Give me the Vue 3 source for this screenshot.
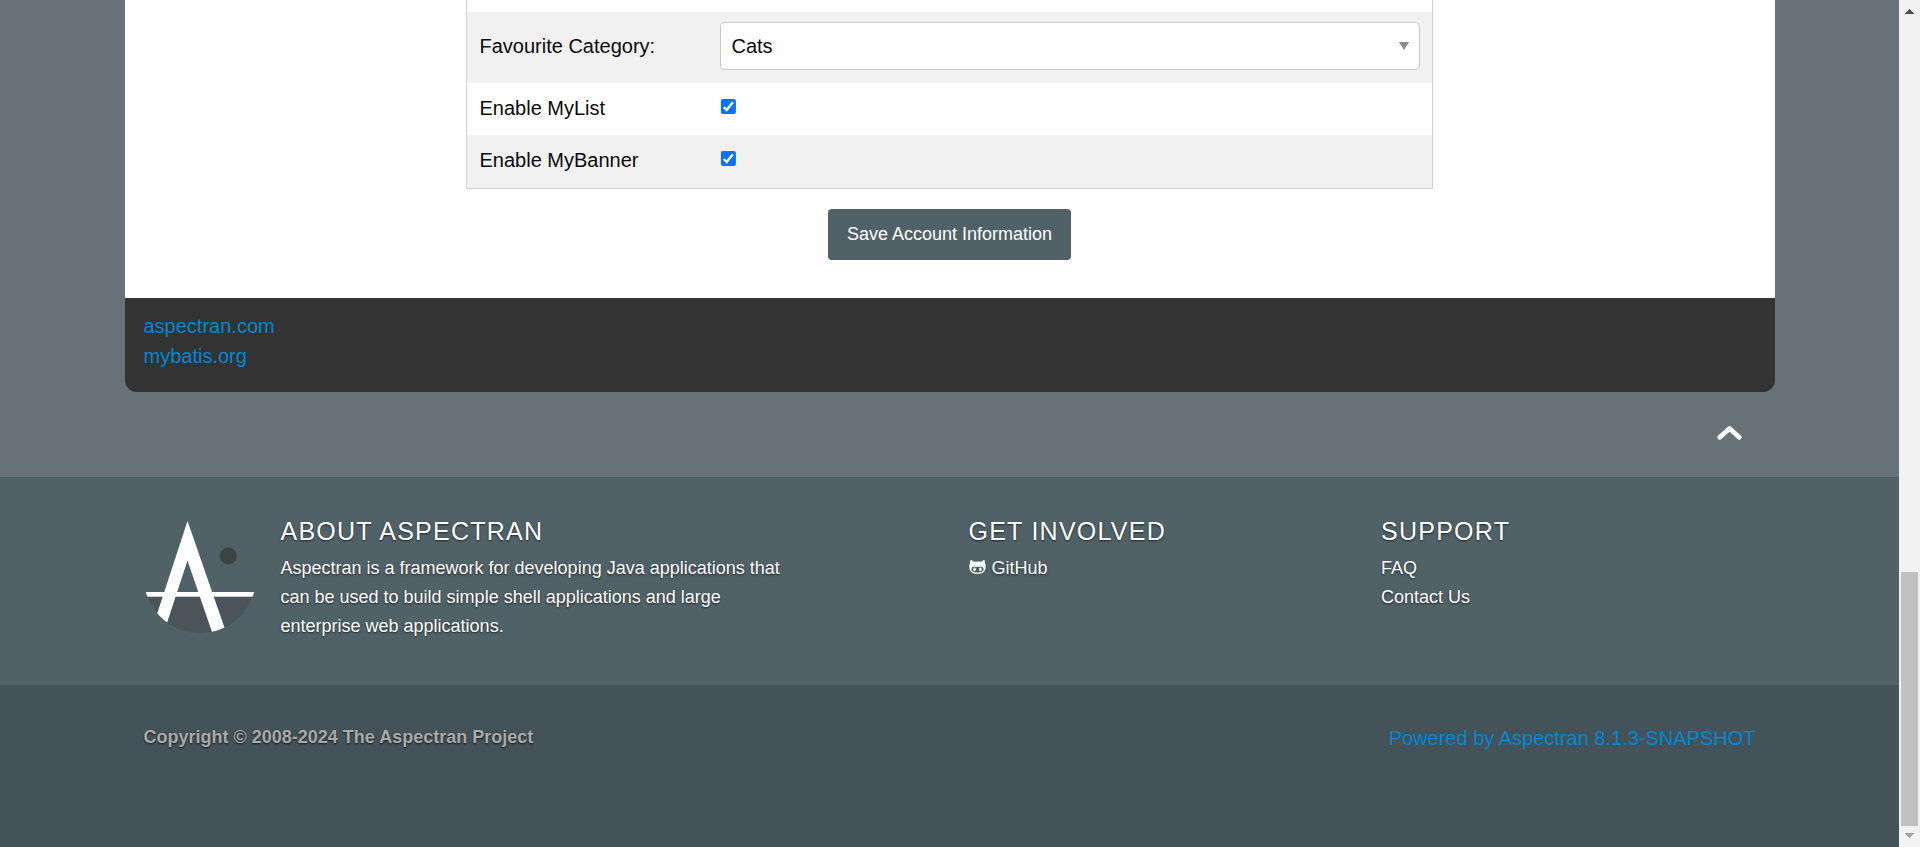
<script setup>
const options = ['Enable MyList', 'Enable MyBanner']
const columns = [
  { title: 'Get Involved', links: ['GitHub'], icon: true },
  { title: 'Support', links: ['FAQ', 'Contact Us'], icon: false }
]
</script>

<template>
  <div class="window">
    <div class="page">
      <main class="card">
        <div class="content">
          <div class="table">
            <div class="row cut"></div>
            <div class="row category">
              <label class="label">Favourite Category:</label>
              <div class="select">
                <span>Cats</span>
                <svg width="10" height="8" viewBox="0 0 10 8"><path d="M0 0H10L5 8Z" fill="#8a8a8a" /></svg>
              </div>
            </div>
            <div v-for="(name, i) in options" :key="name" class="row option" :class="{ shaded: i === 1 }">
              <label class="label">{{ name }}</label>
              <svg class="check" width="17" height="16" viewBox="0 0 17 16">
                <rect x="0.9" y="0" width="15" height="15" rx="2" fill="#0075ff" />
                <path d="M3.7 8L6.7 11L12.9 3.3" fill="none" stroke="#fff" stroke-width="2.4" />
              </svg>
            </div>
          </div>
          <button class="save" type="button">Save Account Information</button>
        </div>
        <nav class="links">
          <a>aspectran.com</a>
          <a>mybatis.org</a>
        </nav>
      </main>
      <div class="totop">
        <svg width="26" height="16" viewBox="0 0 26 16">
          <path d="M2.8 12.3L12.5 3.4L22.2 12.3" fill="none" stroke="#fff" stroke-width="4.8" stroke-linecap="round" stroke-linejoin="round" />
        </svg>
      </div>
      <footer class="footer">
        <svg class="logo" width="112" height="114" viewBox="144 520 112 114">
          <defs>
            <clipPath id="disc">
              <circle cx="200" cy="576.7" r="56.4" />
              <rect x="170" y="520" width="40" height="30" />
            </clipPath>
          </defs>
          <g clip-path="url(#disc)">
            <rect x="140" y="596" width="120" height="40" fill="#4b5459" />
            <rect x="140" y="592" width="120" height="4.7" fill="#fff" />
            <path d="M187.5 521L148.5 640H161.4L187.5 560.5L214.7 640H228.8Z" fill="#fff" />
          </g>
          <circle cx="228.3" cy="556" r="8.5" fill="#3d4444" />
        </svg>
        <section class="about">
          <h4>About Aspectran</h4>
          <p>Aspectran is a framework for developing Java applications that can be used to build simple shell applications and large enterprise web applications.</p>
        </section>
        <section v-for="col in columns" :key="col.title" class="col">
          <h4>{{ col.title }}</h4>
          <a v-for="link in col.links" :key="link">
            <svg v-if="col.icon" class="cat" width="17" height="14" viewBox="0 0 18 15" preserveAspectRatio="none">
              <path fill="#fff" fill-rule="evenodd" d="M1.4 0.3C3 0.2 4.3 1 5.3 1.9Q9 1.3 12.7 1.9C13.7 1 15 .2 16.6 .3Q17.2 2 16.8 3.6Q18 5.2 17.6 8C17.3 12.5 14.6 14.8 9 14.8S.7 12.5 .4 8Q0 5.2 1.2 3.6Q.8 2 1.4 .3ZM5.2 7.1C3.4 7.1 2.6 8.2 2.6 9.9C2.6 12.5 4.8 13.3 9 13.3S15.4 12.5 15.4 9.9C15.4 8.2 14.6 7.1 12.8 7.1Z" />
              <ellipse cx="5.9" cy="10" rx="1.3" ry="2" fill="#fff" />
              <ellipse cx="12.1" cy="10" rx="1.3" ry="2" fill="#fff" />
            </svg>{{ link }}
          </a>
        </section>
      </footer>
      <div class="bottom">
        <strong>Copyright © 2008-2024 The Aspectran Project</strong>
        <a>Powered by Aspectran 8.1.3-SNAPSHOT</a>
      </div>
    </div>
    <div class="scrollbar">
      <svg width="9" height="5" viewBox="0 0 9 5" shape-rendering="crispEdges"><path d="M0 5L4.5 0L9 5Z" fill="#505050" /></svg>
      <div class="thumb"></div>
      <svg width="9" height="5" viewBox="0 0 9 5" shape-rendering="crispEdges"><path d="M0 0L4.5 5L9 0Z" fill="#a3a3a3" /></svg>
    </div>
  </div>
</template>

<style>
body { margin: 0; overflow: hidden; }
</style>

<style scoped>
* { box-sizing: border-box; }
.window {
  display: flex;
  width: 1920px;
  height: 847px;
  overflow: hidden;
  font-family: "Liberation Sans", Arial, sans-serif;
  font-size: 20px;
  line-height: 30px;
  color: #0a0a0a;
}
.page { width: 1899px; display: flex; flex-direction: column; background: #667278; }
.card { width: 1650px; height: 392px; margin-left: 125px; border-radius: 0 0 12px 12px; overflow: hidden; background: #333; }
.content { height: 298px; background: #fefefe; display: flex; flex-direction: column; align-items: center; }
.table { width: 967px; height: 189px; border: 1px solid #d3d3d3; border-top: 0; margin-left: -1px; }
.row { display: flex; padding-left: 12.5px; }
.cut { height: 12px; }
.category { height: 71px; background: #f1f1f1; padding-top: 10px; }
.option { height: 52px; padding-top: 10px; }
.shaded { height: 53px; background: #f1f1f1; }
.label { width: 240.5px; }
.category .label { padding-top: 9px; }
.select {
  width: 700px; height: 48px; padding: 8px 10.5px 0 10.5px;
  display: flex; justify-content: space-between;
  border: 1px solid #cacaca; border-radius: 4px; background: #fefefe;
}
.select svg { margin-top: 11px; }
.check { margin-top: 6px; }
.save {
  width: 243px; height: 51px; margin: 20px 1px 0 0; padding: 0;
  border: 0; border-radius: 4px; background: #506168; color: #fefefe;
  font: 18px/49px "Liberation Sans", Arial, sans-serif;
}
.links { padding: 13px 18.5px 0; display: flex; flex-direction: column; }
.links a, .bottom a { color: #0088d2; }
.totop { height: 85px; padding: 33px 156px 0 0; display: flex; justify-content: flex-end; }
.footer {
  height: 208px; padding: 37px 0 0 144px; display: flex; background: #506168;
  color: #fefefe; font-size: 18px; line-height: 29px; text-shadow: 0 1px 2px rgba(0, 0, 0, .6);
}
.logo { margin: 6px 24.5px 0 0; }
.about { width: 688px; }
.about p { width: 520px; margin: 0; }
.col { width: 412.5px; display: flex; flex-direction: column; }
h4 { margin: 0 0 5px; font-size: 25px; line-height: 35px; font-weight: 400; letter-spacing: 1.25px; text-transform: uppercase; }
.cat { margin-right: 6px; }
.bottom { height: 162px; padding: 38px 143.5px 0 143.5px; display: flex; justify-content: space-between; background: #445259; }
.bottom strong { font-size: 18px; line-height: 29px; color: #aaa; text-shadow: 0 1px 2px rgba(0, 0, 0, .7); }
.scrollbar { width: 21px; padding: 9px 2px 9px; display: flex; flex-direction: column; align-items: center; background: #f1f1f1; }
.thumb { width: 17px; height: 254px; margin: auto 0 7px; background: #c1c1c1; }
</style>
